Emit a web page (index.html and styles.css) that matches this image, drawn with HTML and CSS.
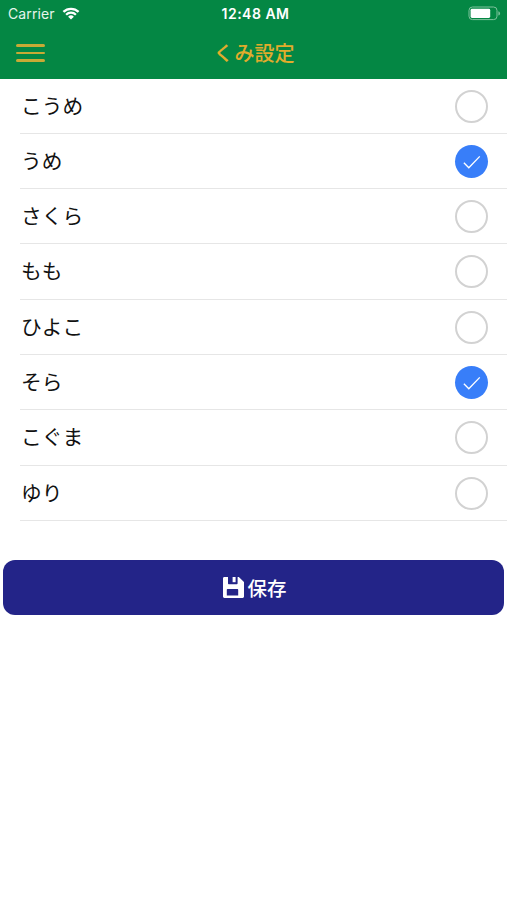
FILE: index.html
```html
<!DOCTYPE html>
<html lang="ja">
<head>
    <meta charset="UTF-8">
    <title>くみ設定</title>
    <link rel="stylesheet" href="styles.css">
</head>
<body>
    <div class="header">
        <div class="status">
            <div class="carrier">
                <span>Carrier</span>
                <svg class="wifi" viewBox="0 0 18 13" width="18" height="13">
                    <path d="M1.4 4.9a10.9 10.9 0 0 1 15.2 0M4.1 7.7a7 7 0 0 1 9.8 0" fill="none" stroke="#fff" stroke-width="2.3"/>
                    <path d="M9 12.6L6.1 9.8a4.1 4.1 0 0 1 5.8 0z" fill="#fff"/>
                </svg>
            </div>
            <div class="time">12:48 AM</div>
            <div class="power">
                <svg viewBox="0 0 33 15" width="33" height="15">
                    <rect x="1" y="1" width="28" height="12.6" rx="3.4" fill="none" stroke="#7fc39d" stroke-width="1"/>
                    <rect x="2.6" y="2.8" width="19.6" height="9.2" rx="1.4" fill="#fff"/>
                    <path d="M30.4 5.2a2.3 2.3 0 0 1 0 4.4z" fill="#7fc39d"/>
                </svg>
            </div>
        </div>
        <div class="nav">
            <div class="menu">
                <span></span>
                <span></span>
                <span></span>
            </div>
            <h1>くみ設定</h1>
        </div>
    </div>
    <ul class="list">
        <li><span>こうめ</span><i class="check"></i></li>
        <li><span>うめ</span><i class="check on"><svg viewBox="0 0 32 32"><path d="M8.6 17.2l4.8 4.8L24 11"/></svg></i></li>
        <li><span>さくら</span><i class="check"></i></li>
        <li><span>もも</span><i class="check"></i></li>
        <li><span>ひよこ</span><i class="check"></i></li>
        <li><span>そら</span><i class="check on"><svg viewBox="0 0 32 32"><path d="M8.6 17.2l4.8 4.8L24 11"/></svg></i></li>
        <li><span>こぐま</span><i class="check"></i></li>
        <li><span>ゆり</span><i class="check"></i></li>
    </ul>
    <button class="save">
        <svg viewBox="0 0 21 21" width="21" height="21">
            <path fill="#fff" fill-rule="evenodd" d="M1.4 0H5v6.2c0 .6.4 1 1 1h7.6c.6 0 1-.4 1-1V0h1.2L21 5v14.6c0 .8-.6 1.4-1.4 1.4H1.4C.6 21 0 20.4 0 19.6V1.4C0 .6.6 0 1.4 0zM4.8 12c-.6 0-1 .4-1 1v5.6h11.4V13c0-.6-.4-1-1-1z"/>
            <path fill="#fff" d="M9.6 0h3v5.2h-3z"/>
        </svg>
        <span>保存</span>
    </button>
</body>
</html>
```

FILE: styles.css
```css
*{
    padding: 0;
    margin: 0;
    box-sizing: border-box;
}
body{
    background: #fff;
    font-family: "Noto Sans CJK JP", sans-serif;
    color: #111;
}
.header{
    height: 79px;
    background: #048744;
}
.status{
    display: grid;
    grid-template-columns: 1fr auto 1fr;
    align-items: center;
    height: 27px;
    padding: 0 6px 0 8px;
    color: #fff;
    font-family: Inter, sans-serif;
    font-size: 14px;
}
.carrier{
    display: flex;
    align-items: center;
    gap: 7px;
    color: #e6f5ec;
    letter-spacing: 0.1px;
}
.time{
    padding-left: 2px;
    font-weight: 600;
    letter-spacing: 0.5px;
}
.power{
    display: flex;
    justify-content: flex-end;
}
.nav{
    display: grid;
    grid-template-columns: 30px 1fr 30px;
    align-items: center;
    height: 52px;
    padding: 0 15px 0 16px;
}
.menu{
    display: flex;
    flex-direction: column;
    gap: 5px;
    width: 29px;
}
.menu span{
    height: 2.5px;
    border-radius: 2px;
    background: #c8aa35;
}
.nav h1{
    color: #e2ac2c;
    font-size: 20px;
    font-weight: 500;
    line-height: 30px;
    text-align: center;
}
.list{
    list-style: none;
    padding-left: 20px;
}
.list li{
    display: flex;
    justify-content: space-between;
    align-items: center;
    height: 55.35px;
    padding: 1px 19px 0 1px;
    border-bottom: 1px solid #e6e6e6;
    font-size: 20.7px;
    line-height: 30px;
}
.list li:first-child{
    height: 54.5px;
}
.list span{
    padding-bottom: 3px;
}
.check{
    width: 33px;
    height: 33px;
    border: 2px solid #d2d2d2;
    border-radius: 50%;
}
.check.on{
    border: none;
    background: #387ef9;
}
.check svg{
    display: block;
}
.check path{
    fill: none;
    stroke: #fff;
    stroke-width: 1.3;
}
.save{
    display: flex;
    justify-content: center;
    align-items: center;
    gap: 3px;
    width: 501px;
    height: 55px;
    margin: 39.2px auto 0;
    padding-left: 3px;
    border: none;
    border-radius: 12px;
    background: #232488;
    color: #fff;
    font-family: inherit;
    font-size: 19.5px;
    font-weight: 500;
    line-height: 30px;
}
```
